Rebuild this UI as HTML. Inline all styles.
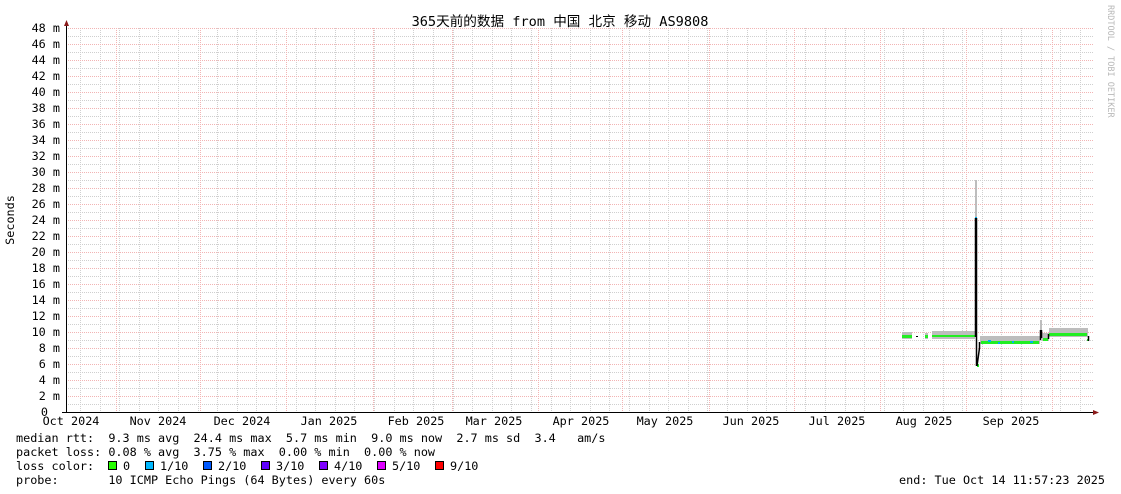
<!DOCTYPE html>
<html><head><meta charset="utf-8"><style>
html,body{margin:0;padding:0;background:#fff;}
svg{display:block}
text{font-family:"DejaVu Sans Mono","Liberation Mono","Noto Sans CJK SC",monospace;font-size:11.8px;fill:#000}
</style></head><body>
<svg width="1121" height="494" viewBox="0 0 1121 494" xmlns="http://www.w3.org/2000/svg">
<rect width="1121" height="494" fill="#fff"/>
<path stroke="#cfcfcf" stroke-width="1" stroke-dasharray="1,1" fill="none" d="M66 36.5H1093M66 52.5H1093M66 68.5H1093M66 84.5H1093M66 100.5H1093M66 116.5H1093M66 132.5H1093M66 148.5H1093M66 164.5H1093M66 180.5H1093M66 196.5H1093M66 212.5H1093M66 228.5H1093M66 244.5H1093M66 260.5H1093M66 276.5H1093M66 292.5H1093M66 308.5H1093M66 324.5H1093M66 340.5H1093M66 356.5H1093M66 372.5H1093M66 388.5H1093M66 404.5H1093"/>
<path stroke="#cfcfcf" stroke-width="1" stroke-dasharray="1,1" fill="none" d="M80.5 28V412M100.5 28V412M119.5 28V412M139.5 28V412M158.5 28V412M178.5 28V412M198.5 28V412M217.5 28V412M237.5 28V412M256.5 28V412M276.5 28V412M296.5 28V412M315.5 28V412M335.5 28V412M354.5 28V412M374.5 28V412M394.5 28V412M413.5 28V412M433.5 28V412M453.5 28V412M472.5 28V412M492.5 28V412M511.5 28V412M531.5 28V412M551.5 28V412M570.5 28V412M590.5 28V412M609.5 28V412M629.5 28V412M649.5 28V412M668.5 28V412M688.5 28V412M707.5 28V412M727.5 28V412M747.5 28V412M766.5 28V412M786.5 28V412M805.5 28V412M825.5 28V412M845.5 28V412M864.5 28V412M884.5 28V412M903.5 28V412M923.5 28V412M943.5 28V412M962.5 28V412M982.5 28V412M1001.5 28V412M1021.5 28V412M1041.5 28V412M1060.5 28V412M1080.5 28V412"/>
<path stroke="#f2b4b4" stroke-width="1" stroke-dasharray="1,1" fill="none" d="M66 28.5H1093M66 44.5H1093M66 60.5H1093M66 76.5H1093M66 92.5H1093M66 108.5H1093M66 124.5H1093M66 140.5H1093M66 156.5H1093M66 172.5H1093M66 188.5H1093M66 204.5H1093M66 220.5H1093M66 236.5H1093M66 252.5H1093M66 268.5H1093M66 284.5H1093M66 300.5H1093M66 316.5H1093M66 332.5H1093M66 348.5H1093M66 364.5H1093M66 380.5H1093M66 396.5H1093"/>
<path stroke="#f2b4b4" stroke-width="1" stroke-dasharray="1,1" fill="none" d="M116.5 28V412M200.5 28V412M286.5 28V412M373.5 28V412M452.5 28V412M538.5 28V412M622.5 28V412M709.5 28V412M794.5 28V412M880.5 28V412M966.5 28V412M1052.5 28V412"/>
<g fill="#bdbdbd">
<rect x="902" y="332" width="10" height="7"/>
<rect x="925" y="333" width="3" height="6"/>
<rect x="932" y="331" width="43" height="8"/>
<rect x="975" y="180" width="2" height="40"/>
<rect x="980" y="336" width="60" height="8"/>
<rect x="1040" y="320" width="2" height="12"/>
<rect x="1042" y="333" width="7" height="8"/>
<rect x="1049" y="328" width="39" height="9"/>
</g>
<g fill="#22ee22">
<rect x="902" y="335" width="10" height="3"/>
<rect x="925" y="335" width="3" height="3"/>
<rect x="932" y="335" width="43" height="2"/>
<rect x="981" y="341" width="58" height="3"/>
<rect x="1043" y="338" width="5" height="3"/>
<rect x="1049" y="333" width="38" height="3"/>
<rect x="1087" y="339" width="2" height="2"/>
<rect x="977" y="364" width="2" height="3"/>
</g>
<g fill="#00b0f0">
<rect x="988" y="340" width="3" height="2"/><rect x="998" y="342" width="2" height="2"/><rect x="1012" y="341" width="2" height="2"/><rect x="1030" y="341" width="3" height="2"/><rect x="975" y="217" width="2" height="3"/>
</g>
<path stroke="#000" stroke-width="1.5" fill="none" d="M975.5 337V218M976.5 218V366M977 366L979.5 348V342M1040.5 340V330M1041.5 330V338M1048.5 339V334M1088.5 336V341"/>
<rect x="916" y="336" width="2" height="1" fill="#000"/>
<path stroke="#000" stroke-width="1" fill="none" d="M66.5 26V412.5M62 412.5H1094"/>
<path d="M64 26L69 26L66.5 20Z" fill="#8b1a1a"/>
<path d="M1093 410L1093 415L1099 412.5Z" fill="#8b1a1a"/>
<g text-anchor="end" style="font-size:9.8px">
<text x="60" y="32">48 m</text><text x="60" y="48">46 m</text><text x="60" y="64">44 m</text><text x="60" y="80">42 m</text><text x="60" y="96">40 m</text><text x="60" y="112">38 m</text><text x="60" y="128">36 m</text><text x="60" y="144">34 m</text><text x="60" y="160">32 m</text><text x="60" y="176">30 m</text><text x="60" y="192">28 m</text><text x="60" y="208">26 m</text><text x="60" y="224">24 m</text><text x="60" y="240">22 m</text><text x="60" y="256">20 m</text><text x="60" y="272">18 m</text><text x="60" y="288">16 m</text><text x="60" y="304">14 m</text><text x="60" y="320">12 m</text><text x="60" y="336">10 m</text><text x="60" y="352">8 m</text><text x="60" y="368">6 m</text><text x="60" y="384">4 m</text><text x="60" y="400">2 m</text><text x="48" y="416">0</text>
</g>
<text x="14" y="220" text-anchor="middle" transform="rotate(-90 14 220)">Seconds</text>
<text x="560" y="26" text-anchor="middle" style="font-size:13.6px">365天前的数据 from 中国 北京 移动 AS9808</text>
<text x="1108" y="5" style="fill:#b8b8b8;font-size:8.5px" transform="rotate(90 1108 5)">RRDTOOL / TOBI OETIKER</text>
<g text-anchor="middle" style="font-size:9.9px">
<text x="71" y="425">Oct 2024</text><text x="158" y="425">Nov 2024</text><text x="242" y="425">Dec 2024</text><text x="329" y="425">Jan 2025</text><text x="416" y="425">Feb 2025</text><text x="494" y="425">Mar 2025</text><text x="581" y="425">Apr 2025</text><text x="665" y="425">May 2025</text><text x="751" y="425">Jun 2025</text><text x="837" y="425">Jul 2025</text><text x="924" y="425">Aug 2025</text><text x="1011" y="425">Sep 2025</text>
</g>
<text x="16" y="442" xml:space="preserve">median rtt:  9.3 ms avg  24.4 ms max  5.7 ms min  9.0 ms now  2.7 ms sd  3.4   am/s</text>
<text x="16" y="456" xml:space="preserve">packet loss: 0.08 % avg  3.75 % max  0.00 % min  0.00 % now</text>
<text x="16" y="470" xml:space="preserve">loss color:</text>
<text x="16" y="484" xml:space="preserve">probe:       10 ICMP Echo Pings (64 Bytes) every 60s</text>
<text x="1105" y="484" text-anchor="end">end: Tue Oct 14 11:57:23 2025</text>
<g stroke="#000" stroke-width="1">
<rect x="108.5" y="461.5" width="8" height="8" fill="#26ff00"/>
<rect x="145.5" y="461.5" width="8" height="8" fill="#00b8ff"/>
<rect x="203.5" y="461.5" width="8" height="8" fill="#0059ff"/>
<rect x="261.5" y="461.5" width="8" height="8" fill="#5e00ff"/>
<rect x="319.5" y="461.5" width="8" height="8" fill="#7e00ff"/>
<rect x="377.5" y="461.5" width="8" height="8" fill="#dd00ff"/>
<rect x="435.5" y="461.5" width="8" height="8" fill="#ff0000"/>
</g>
<text x="123" y="470">0</text>
<text x="160" y="470">1/10</text>
<text x="218" y="470">2/10</text>
<text x="276" y="470">3/10</text>
<text x="334" y="470">4/10</text>
<text x="392" y="470">5/10</text>
<text x="450" y="470">9/10</text>
</svg>
</body></html>
